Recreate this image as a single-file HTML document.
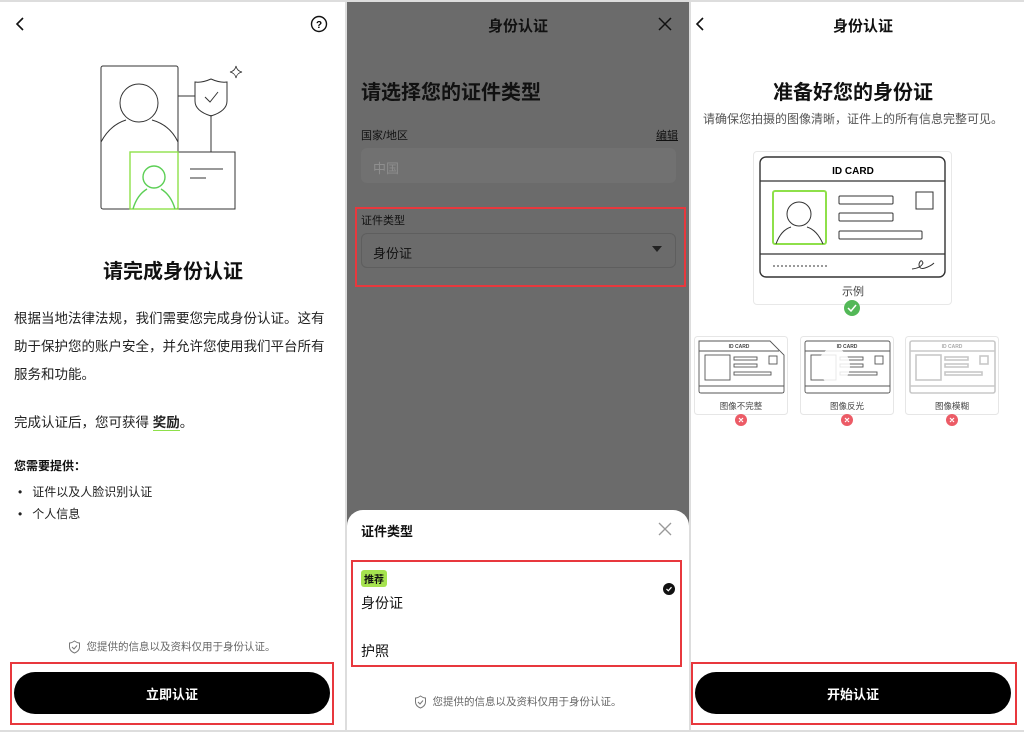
<!DOCTYPE html>
<html><head><meta charset="utf-8"><style>
*{margin:0;padding:0;box-sizing:border-box}
body{width:1024px;height:732px;position:relative;background:#fff;font-family:"Liberation Sans","Noto Sans CJK SC",sans-serif;color:#111;overflow:hidden}
.a{position:absolute;white-space:nowrap}
.c{transform:translateX(-50%)}
.red{position:absolute;border:2px solid #e8383d}
.btn{position:absolute;background:#000;color:#fff;border-radius:21px;font-size:13px;font-weight:bold;display:flex;align-items:center;justify-content:center}
.disc{font-size:10.5px;color:#666;display:flex;align-items:center;gap:6px}
</style></head><body>
<div class="a" style="left:0;top:0;width:1024px;height:2px;background:#ddd"></div>
<div class="a" style="left:345px;top:0;width:2px;height:732px;background:#ddd"></div>
<div class="a" style="left:689px;top:0;width:2px;height:732px;background:#ddd"></div>
<div class="a" style="left:0;top:730px;width:1024px;height:2px;background:#ddd"></div>

<!-- Panel 1 -->
<svg class="a" style="left:0;top:0" width="345" height="230">
<path d="M23 18 L17 24 L23 30" fill="none" stroke="#111" stroke-width="1.6"/>
<circle cx="319" cy="24" r="7.5" fill="none" stroke="#111" stroke-width="1.4"/>
<text x="319" y="28" font-size="10" font-weight="bold" text-anchor="middle" font-family="Liberation Sans">?</text>
<rect x="101" y="66" width="77" height="143" rx="2" fill="none" stroke="#333" stroke-width="1"/>
<circle cx="139" cy="103" r="19" fill="none" stroke="#333"/>
<path d="M101 142 Q110 125 126 120 M152 120 Q170 125 178 142" fill="none" stroke="#333"/>
<path d="M178 96 H195 M211 115 V152" stroke="#333" fill="none"/>
<path d="M211 79 Q202 83 195 82 V101 Q195 111 211 116 Q227 111 227 101 V82 Q220 83 211 79Z" fill="none" stroke="#333"/>
<path d="M205 97 L210 102 L218 92" fill="none" stroke="#333"/>
<path d="M236 66 Q237 71 242 72 Q237 73 236 78 Q235 73 230 72 Q235 71 236 66Z" fill="none" stroke="#333" stroke-width=".8"/>
<rect x="178" y="152" width="57" height="57" fill="none" stroke="#333"/>
<rect x="130" y="152" width="48" height="57" fill="none" stroke="#8ee04a" stroke-width="1.4"/>
<circle cx="154" cy="177" r="11" fill="none" stroke="#5ccf55" stroke-width="1.4"/>
<path d="M133 209 Q137 195 147 189 M161 189 Q171 195 175 209" fill="none" stroke="#5ccf55" stroke-width="1.4"/>
<path d="M190 169 H223 M190 178 H206" stroke="#333"/>
</svg>
<div class="a c" style="left:173px;top:255px;font-size:20px;font-weight:bold">请完成身份认证</div>
<div class="a" style="left:14px;top:305px;font-size:13.5px;line-height:28px;color:#222">根据当地法律法规，我们需要您完成身份认证。这有<br>助于保护您的账户安全，并允许您使用我们平台所有<br>服务和功能。</div>
<div class="a" style="left:14px;top:412px;font-size:13.5px;line-height:22px;color:#222">完成认证后，您可获得 <b style="border-bottom:1px solid #8ee04a">奖励</b>。</div>
<div class="a" style="left:14px;top:457px;font-size:12px;font-weight:bold">您需要提供：</div>
<div class="a" style="left:18px;top:481px;font-size:12px;line-height:22px;color:#222">•&nbsp;&nbsp;&nbsp;证件以及人脸识别认证<br>•&nbsp;&nbsp;&nbsp;个人信息</div>
<div class="a disc c" style="left:172px;top:639px"><svg width="12" height="14"><path d="M6 1 Q3 3 1 3 V7 Q1 11 6 13 Q11 11 11 7 V3 Q9 3 6 1Z M3.5 7 L5.5 9 L8.5 5.5" fill="none" stroke="#777"/></svg>您提供的信息以及资料仅用于身份认证。</div>
<div class="red" style="left:10px;top:662px;width:324px;height:63px"></div>
<div class="btn" style="left:14px;top:672px;width:316px;height:42px">立即认证</div>

<!-- Panel 2 -->
<div class="a" style="left:347px;top:2px;width:342px;height:728px;background:#6b6b6b"></div>
<div class="a c" style="left:518px;top:15px;font-size:15px;font-weight:bold;color:#111">身份认证</div>
<svg class="a" style="left:657px;top:16px" width="16" height="16"><path d="M2 2 L14 14 M14 2 L2 14" stroke="#111" stroke-width="1.5"/></svg>
<div class="a" style="left:361px;top:76px;font-size:20px;font-weight:bold;color:#111">请选择您的证件类型</div>
<div class="a" style="left:361px;top:127px;font-size:11px;color:#111">国家/地区</div>
<div class="a" style="left:656px;top:127px;font-size:11px;color:#111;text-decoration:underline">编辑</div>
<div class="a" style="left:361px;top:148px;width:315px;height:35px;background:#717171;border-radius:6px"></div>
<div class="a" style="left:373px;top:158px;font-size:13px;color:#8e8e8e">中国</div>
<div class="red" style="left:355px;top:207px;width:331px;height:80px"></div>
<div class="a" style="left:361px;top:212px;font-size:11px;color:#111">证件类型</div>
<div class="a" style="left:361px;top:233px;width:315px;height:35px;border:1px solid #5e5e5e;border-radius:6px"></div>
<div class="a" style="left:373px;top:243px;font-size:13px;color:#111">身份证</div>
<svg class="a" style="left:652px;top:246px" width="10" height="6"><path d="M0 0 H10 L5 6Z" fill="#222"/></svg>
<div class="a" style="left:347px;top:510px;width:342px;height:220px;background:#fff;border-radius:16px 16px 0 0"></div>
<div class="a" style="left:361px;top:521px;font-size:13px;font-weight:bold">证件类型</div>
<svg class="a" style="left:658px;top:522px" width="14" height="14"><path d="M1 1 L13 13 M13 1 L1 13" stroke="#999" stroke-width="1.3"/></svg>
<div class="red" style="left:351px;top:560px;width:331px;height:107px"></div>
<div class="a" style="left:361px;top:570px;font-size:10px;font-weight:bold;background:#a6e34f;padding:1px 3px;border-radius:3px">推荐</div>
<div class="a" style="left:361px;top:593px;font-size:14px">身份证</div>
<svg class="a" style="left:662px;top:582px" width="14" height="14"><circle cx="7" cy="7" r="6" fill="#111"/><path d="M4.5 7 L6.3 8.8 L9.5 5.2" fill="none" stroke="#fff" stroke-width="1.2"/></svg>
<div class="a" style="left:361px;top:641px;font-size:14px">护照</div>
<div class="a disc c" style="left:518px;top:694px"><svg width="12" height="14"><path d="M6 1 Q3 3 1 3 V7 Q1 11 6 13 Q11 11 11 7 V3 Q9 3 6 1Z M3.5 7 L5.5 9 L8.5 5.5" fill="none" stroke="#777"/></svg>您提供的信息以及资料仅用于身份认证。</div>

<!-- Panel 3 -->
<svg class="a" style="left:694px;top:16px" width="14" height="16"><path d="M9 2 L3 8 L9 14" fill="none" stroke="#111" stroke-width="1.6"/></svg>
<div class="a c" style="left:863px;top:15px;font-size:15px;font-weight:bold">身份认证</div>
<div class="a c" style="left:853px;top:76px;font-size:20px;font-weight:bold">准备好您的身份证</div>
<div class="a c" style="left:853px;top:110px;font-size:12px;color:#555">请确保您拍摄的图像清晰，证件上的所有信息完整可见。</div>
<div class="a" style="left:753px;top:151px;width:199px;height:154px;border:1px solid #e8e8e8;border-radius:4px"></div>
<svg class="a" style="left:753px;top:151px" width="199" height="170">
<rect x="7" y="6" width="185" height="120" rx="6" fill="none" stroke="#333" stroke-width="1.4"/>
<path d="M7 30 H192 M7 103 H192" stroke="#333" stroke-width="1.2"/>
<text x="100" y="23" font-size="10" font-weight="bold" text-anchor="middle" font-family="Liberation Sans">ID CARD</text>
<rect x="20" y="40" width="53" height="53" rx="2" fill="none" stroke="#8ee04a" stroke-width="2"/>
<circle cx="46" cy="63" r="12" fill="none" stroke="#333"/>
<path d="M23 93 Q28 79 38 76 M54 76 Q64 79 70 93" fill="none" stroke="#333"/>
<rect x="86" y="45" width="54" height="8" rx="1" fill="none" stroke="#333"/>
<rect x="86" y="62" width="54" height="8" rx="1" fill="none" stroke="#333"/>
<rect x="86" y="80" width="83" height="8" rx="1" fill="none" stroke="#333"/>
<rect x="163" y="41" width="17" height="17" fill="none" stroke="#333"/>
<path d="M20 115 H74" stroke="#333" stroke-dasharray="2 2"/>
<path d="M159 118 Q168 117 170 112 Q168 107 166 113 Q166 119 172 117 Q178 115 181 112" fill="none" stroke="#333"/>
<text x="100" y="144" font-size="11" text-anchor="middle" fill="#444" font-family="Liberation Sans,Noto Sans CJK SC">示例</text>
<circle cx="99" cy="157" r="8" fill="#53b857"/>
<path d="M95 157 L98 160 L103 154" fill="none" stroke="#fff" stroke-width="1.5"/>
</svg>

<svg class="a" style="left:694px;top:336px" width="310" height="95">
<g id="cd">
<rect x="0.5" y="0.5" width="93" height="78" rx="3" fill="none" stroke="#e6e6e6"/>
</g>
<rect x="106.5" y="0.5" width="93" height="78" rx="3" fill="none" stroke="#e6e6e6"/>
<rect x="211.5" y="0.5" width="93" height="78" rx="3" fill="none" stroke="#e6e6e6"/>
<g fill="none" stroke="#555" stroke-width=".9">
<path d="M5 5 H76 L90 19 V55 Q90 57 88 57 H7 Q5 57 5 55Z M5 15 H85 M5 50 H90"/>
<rect x="11" y="19" width="25" height="25"/><rect x="40" y="21" width="23" height="3"/><rect x="40" y="28" width="23" height="3"/><rect x="40" y="36" width="37" height="3"/><rect x="75" y="20" width="8" height="8"/>
<rect x="111" y="5" width="85" height="52" rx="2"/><path d="M111 15 H196 M111 50 H196"/>
<rect x="117" y="19" width="25" height="25"/><rect x="146" y="21" width="23" height="3"/><rect x="146" y="28" width="23" height="3"/><rect x="146" y="36" width="37" height="3"/><rect x="181" y="20" width="8" height="8"/>
</g>
<ellipse cx="140" cy="30" rx="16" ry="18" fill="#fff" opacity=".85"/>
<g fill="none" stroke="#bbb" stroke-width="1.6" opacity=".8">
<rect x="216" y="5" width="85" height="52" rx="2"/><path d="M216 15 H301 M216 50 H301"/>
<rect x="222" y="19" width="25" height="25"/><rect x="251" y="21" width="23" height="3"/><rect x="251" y="28" width="23" height="3"/><rect x="251" y="36" width="37" height="3"/><rect x="286" y="20" width="8" height="8"/>
</g>
<g font-size="5" font-weight="bold" text-anchor="middle" font-family="Liberation Sans" fill="#444"><text x="45" y="12">ID CARD</text><text x="153" y="12">ID CARD</text><text x="258" y="12" fill="#aaa">ID CARD</text></g>
<g font-size="8.5" text-anchor="middle" fill="#444" font-family="Liberation Sans,Noto Sans CJK SC"><text x="47" y="73">图像不完整</text><text x="153" y="73">图像反光</text><text x="258" y="73">图像模糊</text></g>
<g><circle cx="47" cy="84" r="6" fill="#ec5b66"/><circle cx="153" cy="84" r="6" fill="#ec5b66"/><circle cx="258" cy="84" r="6" fill="#ec5b66"/>
<path d="M45 82 L49 86 M49 82 L45 86 M151 82 L155 86 M155 82 L151 86 M256 82 L260 86 M260 82 L256 86" stroke="#fff" stroke-width="1.2"/></g>
</svg>
<div class="red" style="left:691px;top:662px;width:326px;height:63px"></div>
<div class="btn" style="left:695px;top:672px;width:316px;height:42px">开始认证</div>
</body></html>
